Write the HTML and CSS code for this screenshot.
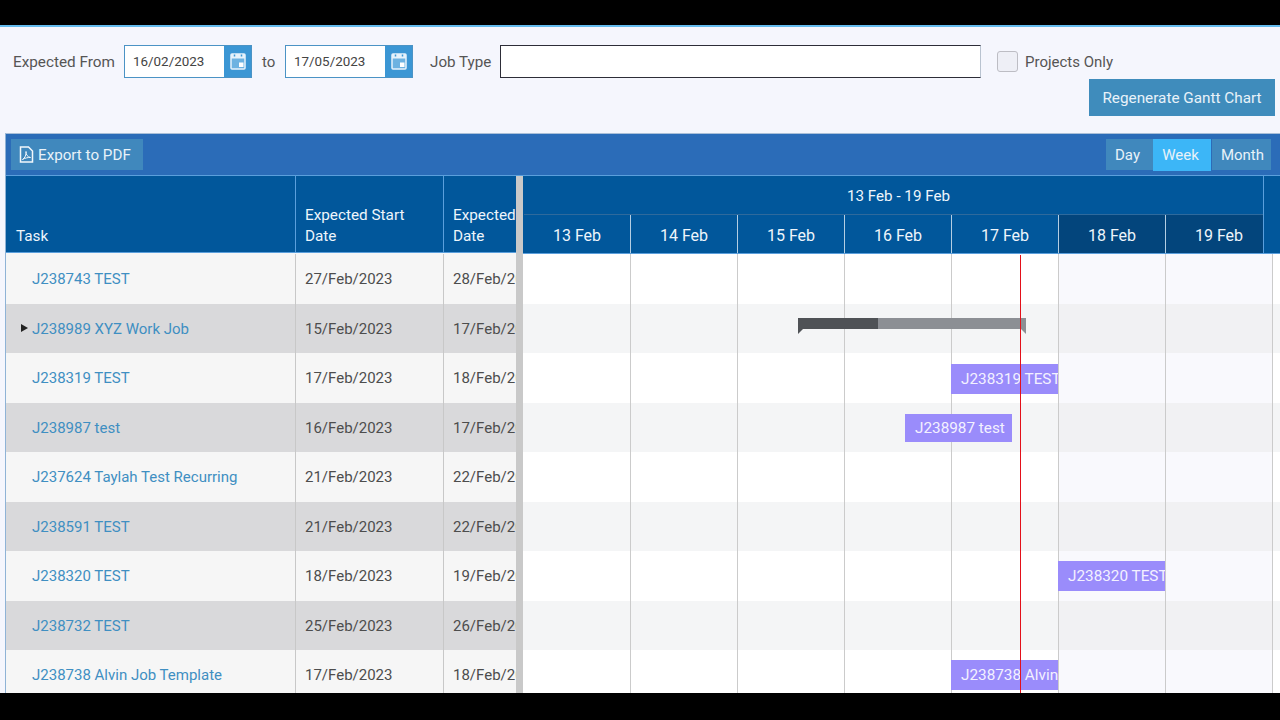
FILE: index.html
```html
<!DOCTYPE html>
<html lang="en">
  <head>
    <meta charset="UTF-8" />
    <title>Gantt Chart</title>
    <link rel="stylesheet" href="styles.css">
  </head>
  <body>
    <div class="black-top"></div>
    <main class="page">
      <div class="filters">
        <label class="lbl lbl-from">Expected From</label>
        <div class="date-picker">
          <input class="date-input" type="text" value="16/02/2023" />
          <span class="cal-btn">
            <svg width="16" height="17" viewBox="0 0 16 17"><rect x="1" y="1" width="14" height="15" rx="1" fill="#6db2e1" stroke="#e6f2fb" stroke-width="1.500"/><rect x="1" y="1" width="14" height="4.500" fill="#e6f2fb"/><path d="M4.500 1.500v2M11.500 1.500v2" stroke="#3b96d4" stroke-width="1.500"/><rect x="9" y="9.500" width="4.500" height="4.500" fill="#fff"/></svg>
          </span>
        </div>
        <label class="lbl lbl-to">to</label>
        <div class="date-picker">
          <input class="date-input" type="text" value="17/05/2023" />
          <span class="cal-btn">
            <svg width="16" height="17" viewBox="0 0 16 17"><rect x="1" y="1" width="14" height="15" rx="1" fill="#6db2e1" stroke="#e6f2fb" stroke-width="1.500"/><rect x="1" y="1" width="14" height="4.500" fill="#e6f2fb"/><path d="M4.500 1.500v2M11.500 1.500v2" stroke="#3b96d4" stroke-width="1.500"/><rect x="9" y="9.500" width="4.500" height="4.500" fill="#fff"/></svg>
          </span>
        </div>
        <label class="lbl lbl-job">Job Type</label>
        <input class="job-input" type="text" />
        <input class="check" type="checkbox" />
        <label class="lbl">Projects Only</label>
      </div>
      <div class="regen-row">
        <button class="regen">Regenerate Gantt Chart</button>
      </div>

      <section class="gantt">
        <div class="toolbar">
          <button class="tool-btn">
            <svg width="15" height="17" viewBox="0 0 15 17"><path d="M1.500 1h8l4 4v11h-12z" fill="none" stroke="#f2f7fb" stroke-width="1.500"/><path d="M3.500 13.500c2.500-1.500 4-5 3.500-8-.3 2.800 1.500 5.500 4.500 6-2.500-.2-5.500.5-8 2z" fill="none" stroke="#f2f7fb" stroke-width="1"/></svg>
            Export to PDF
          </button>
          <div class="views">
            <button class="view-btn view-day">Day</button>
            <button class="view-btn view-week">Week</button>
            <button class="view-btn view-month">Month</button>
          </div>
        </div>

        <div class="head">
          <div class="head-table">
            <div class="th th-task">Task</div>
            <div class="th">Expected Start Date</div>
            <div class="th th-clip"><span>Expected End<br>Date</span></div>
          </div>
          <div class="splitter"></div>
          <div class="head-time">
            <div class="head-inner">
              <div class="week-title">13 Feb - 19 Feb</div>
              <div class="days">
                <div class="day">13 Feb</div>
                <div class="day">14 Feb</div>
                <div class="day">15 Feb</div>
                <div class="day">16 Feb</div>
                <div class="day">17 Feb</div>
                <div class="day weekend">18 Feb</div>
                <div class="day weekend">19 Feb</div>
              </div>
            </div>
          </div>
          <div class="gutter"></div>
        </div>

        <div class="body">
          <div class="tasks">
            <div class="row"><div class="td task"><a>J238743 TEST</a></div><div class="td">27/Feb/2023</div><div class="td">28/Feb/2023</div></div>
            <div class="row alt"><div class="td task"><span class="arrow"></span><a>J238989 XYZ Work Job</a></div><div class="td">15/Feb/2023</div><div class="td">17/Feb/2023</div></div>
            <div class="row"><div class="td task"><a>J238319 TEST</a></div><div class="td">17/Feb/2023</div><div class="td">18/Feb/2023</div></div>
            <div class="row alt"><div class="td task"><a>J238987 test</a></div><div class="td">16/Feb/2023</div><div class="td">17/Feb/2023</div></div>
            <div class="row"><div class="td task"><a>J237624 Taylah Test Recurring</a></div><div class="td">21/Feb/2023</div><div class="td">22/Feb/2023</div></div>
            <div class="row alt"><div class="td task"><a>J238591 TEST</a></div><div class="td">21/Feb/2023</div><div class="td">22/Feb/2023</div></div>
            <div class="row"><div class="td task"><a>J238320 TEST</a></div><div class="td">18/Feb/2023</div><div class="td">19/Feb/2023</div></div>
            <div class="row alt"><div class="td task"><a>J238732 TEST</a></div><div class="td">25/Feb/2023</div><div class="td">26/Feb/2023</div></div>
            <div class="row"><div class="td task"><a>J238738 Alvin Job Template</a></div><div class="td">17/Feb/2023</div><div class="td">18/Feb/2023</div></div>
          </div>
          <div class="splitter"></div>
          <div class="timeline">
            <div class="tl-row"></div>
            <div class="tl-row alt">
              <div class="summary"><div class="summary-done"></div></div>
            </div>
            <div class="tl-row"><div class="bar bar-319">J238319 TEST</div></div>
            <div class="tl-row alt"><div class="bar bar-987">J238987 test</div></div>
            <div class="tl-row"></div>
            <div class="tl-row alt"></div>
            <div class="tl-row"><div class="bar bar-320">J238320 TEST</div></div>
            <div class="tl-row alt"></div>
            <div class="tl-row"><div class="bar bar-738">J238738 Alvin Job Template</div></div>
            <div class="today"></div>
          </div>
        </div>
      </section>
    </main>
    <div class="black-bottom"></div>
  </body>
</html>
```

FILE: styles.css
```css
* {
  box-sizing: border-box;
}
html, body {
  height: 100%;
}
body {
  margin: 0;
  display: flex;
  flex-direction: column;
  height: 720px;
  overflow: hidden;
  background: #000;
  font-family: Roboto, "Liberation Sans", sans-serif;
  font-size: 15px;
  color: #4d4d4d;
}
button {
  font-family: inherit;
  font-size: 15px;
  border: 0;
  color: #e8f2f9;
}
.black-top {
  height: 27px;
  flex: none;
  border-bottom: 2px solid #64bbee;
}
.black-bottom {
  height: 27px;
  flex: none;
}
.page {
  flex: 1;
  min-height: 0;
  overflow: hidden;
  background: #f5f6fd;
  padding-top: 18px;
}

/* filter bar */
.filters {
  display: flex;
  align-items: center;
  height: 33px;
  padding-left: 13px;
}
.lbl {
  color: #555;
  white-space: nowrap;
}
.lbl-from {
  width: 111px;
  font-size: 15.3px;
}
.lbl-to {
  width: 33px;
  padding-left: 10px;
}
.lbl-job {
  width: 70px;
  margin-left: 17px;
  font-size: 15.2px;
}
.date-picker {
  display: flex;
  width: 128px;
  height: 33px;
  border: 1px solid #4b93c5;
}
.date-input {
  width: 99px;
  height: 100%;
  border: 0;
  padding: 0 0 0 8px;
  background: #fff;
  font-family: inherit;
  font-size: 13.4px;
  color: #444;
}
.cal-btn {
  flex: 1;
  display: flex;
  align-items: center;
  justify-content: center;
  background: #3b96d4;
}
.job-input {
  width: 481px;
  height: 33px;
  background: #fff;
  border: 1px solid #2d2d38;
  border-right-color: #b9c3d0;
}
.check {
  appearance: none;
  width: 21px;
  height: 21px;
  margin: 0 7px 0 16px;
  background: #eeeff6;
  border: 1px solid #bdbdc4;
  border-radius: 3px;
}
.regen-row {
  display: flex;
  justify-content: flex-end;
  padding: 1px 5px 0 0;
  height: 55px;
}
.regen {
  width: 186px;
  height: 37px;
  background: #3f8cbc;
  font-size: 15.3px;
}

/* gantt */
.gantt {
  margin-left: 5px;
  border-left: 1px solid #8fb3d6;
  border-top: 1px solid #a9bfd8;
}
.toolbar {
  display: flex;
  justify-content: space-between;
  align-items: center;
  height: 42px;
  padding: 0 9px 0 5px;
  background: #2b6cb8;
  border-bottom: 1px solid #5b9fdc;
}
.tool-btn {
  display: flex;
  align-items: center;
  gap: 4px;
  width: 132px;
  height: 31px;
  padding: 0 0 0 8px;
  background: #4088bd;
  font-size: 15.2px;
}
.views {
  display: flex;
  align-items: center;
}
.view-btn {
  height: 31px;
  padding: 0;
  background: #4088bd;
}
.view-day {
  width: 47px;
  padding-right: 4px;
}
.view-week {
  width: 58px;
  height: 32px;
  padding-right: 3px;
  background: #3cb6f7;
}
.view-month {
  width: 59px;
  margin-left: 1px;
  padding-left: 2px;
}
.head {
  display: flex;
  height: 78px;
  background: #01579b;
  color: #eef5fb;
}
.head-table, .row {
  display: grid;
  grid-template-columns: 290px 148px 72px;
  width: 510px;
  flex: none;
}
.head-table {
  grid-template-rows: 77px;
  background: #f6f6f6;
}
.th {
  display: flex;
  align-items: flex-end;
  padding: 0 9px 5px 9px;
  line-height: 21px;
  font-size: 15.3px;
  background: #01579b;
  border-right: 1px solid #5b9fdc;
  border-bottom: 1px solid #5b9fdc;
}
.th-task {
  padding-left: 10px;
}
.th-clip {
  border-right: 0;
  overflow: hidden;
  padding-right: 0;
}
.th-clip span {
  white-space: nowrap;
}
.splitter {
  width: 7px;
  flex: none;
  background: #c9c9c9;
}
.head-time {
  width: 740px;
  overflow: hidden;
  flex: none;
  border-bottom: 1px solid #5b9fdc;
}
.head-inner {
  width: 750px;
  padding-left: 1px;
}
.week-title {
  height: 39px;
  line-height: 41px;
  text-align: center;
  font-size: 15.2px;
  border-bottom: 1px solid #2f6a9c;
}
.days {
  display: grid;
  grid-template-columns: repeat(7, 107px);
  height: 38px;
}
.day {
  text-align: center;
  line-height: 42px;
  font-size: 16px;
  border-right: 1px solid #b4cee3;
}
.weekend {
  background: #03457c;
}
.gutter {
  flex: 1;
  border-left: 1px solid #5b9fdc;
  border-bottom: 1px solid #5b9fdc;
}
.body {
  display: flex;
}
.tasks {
  flex: none;
  width: 510px;
}
.row {
  height: 49.5px;
  background: #f6f6f6;
}
.row.alt {
  background: #d9d9db;
}
.td {
  display: flex;
  align-items: center;
  padding: 1px 0 0 9px;
  white-space: nowrap;
  overflow: hidden;
  border-right: 1px solid #c8c8c8;
}
.td:last-child {
  border-right: 0;
}
.task {
  position: relative;
  padding-left: 26px;
}
.task a {
  color: #3f8fc2;
}
.arrow {
  position: absolute;
  left: 15px;
  top: 20px;
  border-left: 7px solid #222;
  border-top: 4px solid transparent;
  border-bottom: 4px solid transparent;
}
.timeline {
  position: relative;
  flex: 1;
}
.tl-row {
  position: relative;
  height: 49.5px;
  background-color: #fff;
  background-image:
    repeating-linear-gradient(to right, transparent 0 106px, #cbcbcb 106px 107px),
    linear-gradient(to right, transparent 536px, #f9f9fd 536px 749px, transparent 749px);
  background-position: 1px 0, 0 0;
}
.tl-row.alt {
  background-color: #f4f5f6;
  background-image:
    repeating-linear-gradient(to right, transparent 0 106px, #cbcbcb 106px 107px),
    linear-gradient(to right, transparent 536px, #f1f1f3 536px 749px, transparent 749px);
}
.summary {
  position: absolute;
  left: 275px;
  top: 14px;
  width: 228px;
  height: 11px;
  background: #8c8f94;
}
.summary::before, .summary::after {
  content: "";
  position: absolute;
  top: 11px;
  border-top: 5px solid;
  border-left: 3px solid transparent;
  border-right: 3px solid transparent;
}
.summary::before {
  left: 0;
  border-top-color: #4f5256;
  border-left: 0;
  border-right-width: 5px;
}
.summary::after {
  right: 0;
  border-top-color: #8c8f94;
  border-right: 0;
  border-left-width: 5px;
}
.summary-done {
  width: 80px;
  height: 100%;
  background: #4f5256;
}
.bar {
  position: absolute;
  width: 107px;
  height: 30px;
  line-height: 30px;
  padding-left: 10px;
  overflow: hidden;
  white-space: nowrap;
  font-size: 15.3px;
  background: #9a8cfb;
  color: #f3f1ff;
}
.bar-319 {
  left: 428px;
  top: 11px;
}
.bar-987 {
  left: 382px;
  top: 11px;
  height: 28px;
  line-height: 28px;
}
.bar-320 {
  left: 535px;
  top: 10px;
}
.bar-738 {
  left: 428px;
  top: 10px;
}
.today {
  position: absolute;
  left: 497px;
  top: 1px;
  bottom: 0;
  width: 1px;
  background: #e3101a;
}
```
